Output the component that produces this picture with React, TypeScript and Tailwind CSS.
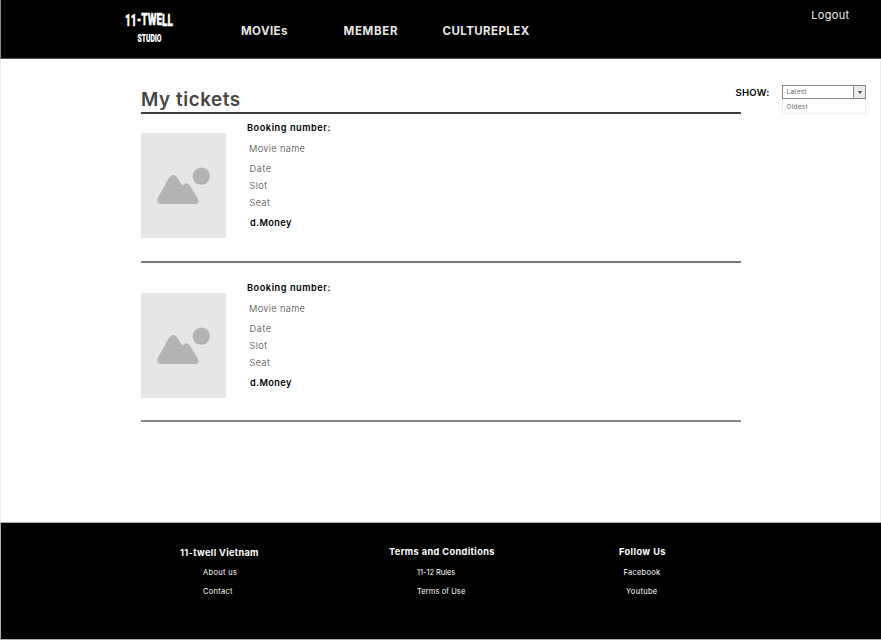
function TicketImage() {
  return (
    <svg className="block h-[105px] w-[85px] shrink-0 bg-[#e6e6e6]" viewBox="0 0 85 105">
      <circle cx="60.3" cy="43.2" r="8.6" fill="#b3b3b3" />
      <path d="M17 64.500 L26.500 47.500 Q32 37 37.500 46.500 L41.300 53 Q45.500 47.500 49.300 53 L56.500 65 Q59 71 54 71 H20.500 Q14 71 17 64.500Z" fill="#b3b3b3" />
    </svg>
  );
}

function Ticket() {
  return (
    <div className="flex h-[105px] w-[600px] gap-[21px]">
      <TicketImage />
      <div className="-mt-[11px] flex flex-col whitespace-nowrap text-[9.2px] text-[#3c3c3c]">
        <b className="font-semibold leading-[12px] tracking-[0.54px] text-black">Booking number:</b>
        <span className="ml-[2px] mt-[9px] font-light leading-[12px] tracking-[0.38px]">Movie name</span>
        <span className="ml-[2.500px] mt-[8px] font-light leading-[12px] tracking-[0.65px]">Date</span>
        <span className="ml-[2.500px] mt-[5px] font-light leading-[12px] tracking-[0.45px]">Slot</span>
        <span className="ml-[2.500px] mt-[5px] font-light leading-[12px] tracking-[0.4px]">Seat</span>
        <b className="ml-[3px] mt-[8px] font-semibold leading-[12px] tracking-[0.4px] text-black">d.Money</b>
      </div>
    </div>
  );
}

export default function App() {
  return (
    <div className="flex h-[640px] w-[881px] flex-col bg-white font-['Inter',sans-serif]">
      <header className="flex h-[59px] border-b border-l border-b-[#555] border-l-[#888] bg-black whitespace-nowrap">
        <svg className="ml-[119px] mt-[4px] h-[48px] w-[60px] overflow-visible" viewBox="120 4 60 48" fill="#fff" stroke="#fff" strokeWidth="0.35" fontFamily="Roboto, sans-serif" fontWeight="900">
          <text x="125" y="26" dy="0 -0.3 -0.4 -0.1 0 0.1 0.2 0.3" fontSize="17" textLength="48" lengthAdjust="spacingAndGlyphs">11-TWELL</text>
          <text x="137.500" y="41.500" fontSize="11.500" textLength="24" lengthAdjust="spacingAndGlyphs" strokeWidth="0.15">STUDIO</text>
        </svg>
        <nav className="ml-[61px] mt-[24px] flex text-[11.5px] font-bold leading-[14px] text-[#e6e6e6]">
          <div className="w-[102.500px] tracking-[0.4px]">MOVIEs</div>
          <div className="w-[99px] tracking-[0.7px]">MEMBER</div>
          <div className="tracking-[0.42px]">CULTUREPLEX</div>
        </nav>
        <span className="ml-auto mr-[31.500px] mt-[8px] h-fit text-[11px] leading-[14px] tracking-[0.35px] text-[#eee]">Logout</span>
      </header>
      <main className="flex h-[463px] border-x border-[#ebebeb] whitespace-nowrap">
        <div className="ml-[140px] w-[600px]">
          <h1 className="mt-[28px] h-[27px] border-b-2 border-[#3f3c3d] text-[18.8px] font-semibold leading-[26px] tracking-[0.57px] text-[#444]">My tickets</h1>
          <div className="mt-[19px] h-[130px] border-b-2 border-[#777]"><Ticket /></div>
          <div className="mt-[30px] h-[129px] border-b-2 border-[#888]"><Ticket /></div>
        </div>
        <div className="ml-[-5.500px] mt-[26px] flex">
          <span className="w-[34.500px] text-[9.5px] font-semibold leading-[16px] tracking-[0.3px]">SHOW:</span>
          <div className="ml-[12px] w-[84px] text-[6.5px] tracking-[0.25px] text-[#666]">
            <div className="flex h-[14px] justify-between border border-[#888]">
              <span className="ml-[3.500px] leading-[12px]">Latest</span>
              <span className="flex w-[12px] items-center justify-center border-l border-[#888] bg-[#e9e9e9]">
                <svg className="h-[3px] w-[4px]" viewBox="0 0 4 3"><path d="M0 0H4L2 3Z" fill="#444" /></svg>
              </span>
            </div>
            <div className="h-[15px] rounded-b-[2px] border border-t-0 border-[#ececec] pl-[3.500px] leading-[16px]">Oldest</div>
          </div>
        </div>
      </main>
      <footer className="flex h-[118px] border border-r-0 border-[#aaa] bg-black whitespace-nowrap text-[7.500px] leading-[12px] text-white">
        <div className="ml-[179px] mt-[24px] w-[209px]">
          <b className="block text-[9.2px] tracking-[0.32px]">11-twell Vietnam</b>
          <div className="ml-[23px] mt-[8px] tracking-[0.32px]">About us</div>
          <div className="ml-[23px] mt-[7px] tracking-[0.28px]">Contact</div>
        </div>
        <div className="mt-[23px] w-[230px]">
          <b className="block text-[9.2px] tracking-[0.38px]">Terms and Conditions</b>
          <div className="ml-[28px] mt-[9px] tracking-[-0.05px]">11-12 Rules</div>
          <div className="ml-[28px] mt-[7px] tracking-[0.07px]">Terms of Use</div>
        </div>
        <div className="mt-[23px]">
          <b className="block text-[9.2px] tracking-[0.42px]">Follow Us</b>
          <div className="ml-[4.500px] mt-[9px] tracking-[0.25px]">Facebook</div>
          <div className="ml-[7px] mt-[7px] tracking-[0.32px]">Youtube</div>
        </div>
      </footer>
    </div>
  );
}
